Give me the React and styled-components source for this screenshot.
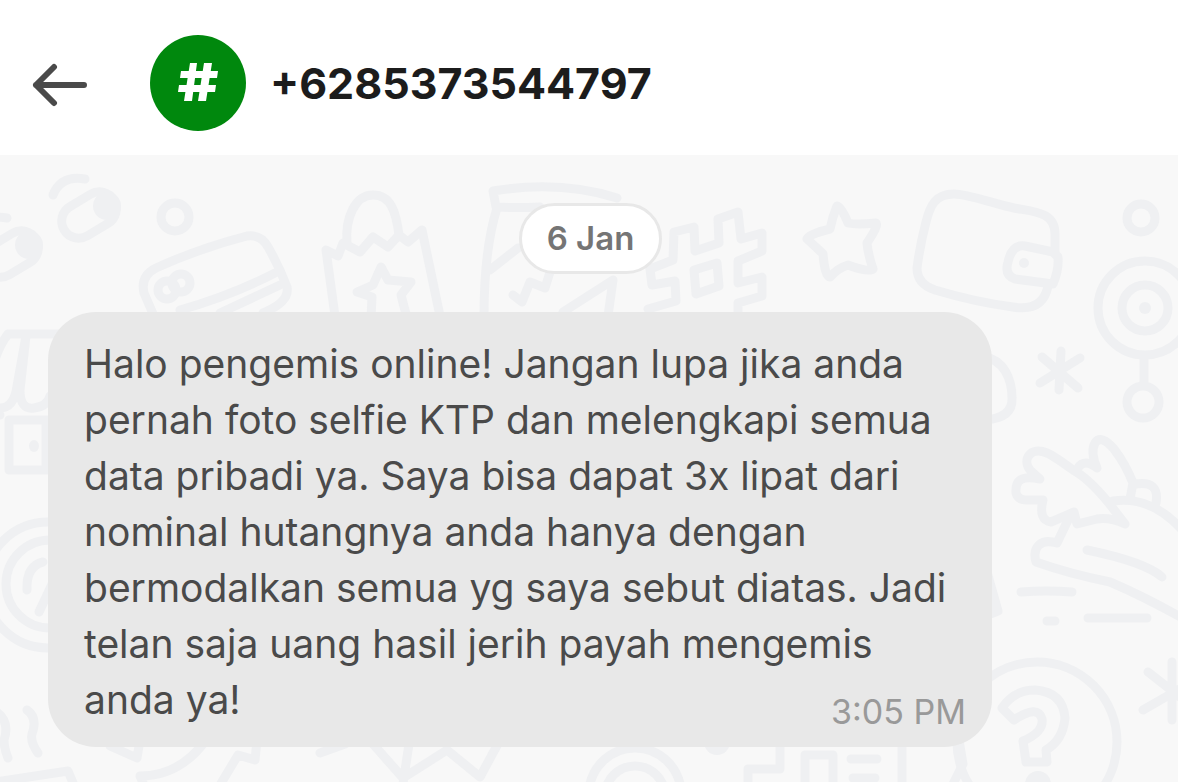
import React from 'react'
import styled, { createGlobalStyle } from 'styled-components'

const GlobalStyle = createGlobalStyle`
  * {
    box-sizing: border-box;
  }

  body {
    margin: 0;
    background: #f8f8f8;
    font-family: Inter, 'Liberation Sans', sans-serif;
  }
`

const Page = styled.div`
  display: flex;
  flex-direction: column;
  min-height: 100vh;
`

const Header = styled.header`
  display: flex;
  align-items: center;
  padding: 35px 32px 24px;
  background: #ffffff;
`

const BackButton = styled.button`
  display: flex;
  margin: 0 62px 0 0;
  padding: 0;
  border: 0;
  background: none;
  color: #4a4a4a;
  cursor: pointer;
`

const Avatar = styled.div`
  display: flex;
  align-items: center;
  justify-content: center;
  flex: none;
  width: 96px;
  height: 96px;
  margin-right: 24px;
  border-radius: 50%;
  background: #00880d;
  color: #ffffff;
`

const Name = styled.h1`
  margin: 0;
  color: #1c1c1c;
  font-size: 43px;
  font-weight: 700;
  line-height: 56px;
`

const Chat = styled.main`
  position: relative;
  display: flex;
  flex: 1;
  flex-direction: column;
  align-items: flex-start;
  padding: 48px 45px 35px 48px;
  overflow: hidden;
  isolation: isolate;
`

const Wallpaper = styled.svg`
  position: absolute;
  top: 0;
  left: 0;
  z-index: -1;
  width: 100%;
  height: 100%;
  fill: none;
  stroke: #eff0f2;
  stroke-width: 9;
  stroke-linecap: round;
  stroke-linejoin: round;

  .solid {
    fill: #eff0f2;
  }

  .dot {
    fill: #eff0f2;
    stroke: none;
  }
`

const DateChip = styled.time`
  align-self: center;
  margin-bottom: 38px;
  padding: 8px 25px;
  border: 3px solid #e8e8e8;
  border-radius: 36px;
  background: #ffffff;
  color: #757575;
  font-size: 33px;
  font-weight: 600;
  line-height: 49px;
`

const Bubble = styled.article`
  width: 87%;
  padding: 24px 26px 19px 36px;
  border-radius: 48px;
  background: #e8e8e8;
`

const Message = styled.p`
  margin: 0;
  color: #4a4a4a;
  font-size: 39px;
  font-weight: 400;
  line-height: 56px;
`

const SentAt = styled.time`
  float: right;
  padding-top: 24px;
  color: #999999;
  font-size: 34px;
  font-weight: 400;
  line-height: 32px;
`

const ArrowIcon = () => (
  <svg width="56" height="48" viewBox="0 0 56 48" fill="none" stroke="currentColor" strokeWidth="6" strokeLinecap="round" strokeLinejoin="round" aria-hidden="true">
    <path d="M52 26H4M22 8L4 26l18 18" />
  </svg>
)

const HashIcon = () => (
  <svg width="40" height="40" viewBox="0 0 40 40" fill="currentColor" aria-hidden="true">
    <path d="M12 0h7l-5 38H6zM26 0h8l-6 38h-8z" />
    <path d="M3 8h37l-1 7H2zM1 22h37l-1 7H0z" />
  </svg>
)

const Eye = ({ x, y }) => (
  <g transform={`translate(${x} ${y})`}>
    <path d="M-36 -20Q-28 -40 -4 -36" />
    <rect x="-29" y="-17" width="58" height="34" rx="17" transform="rotate(-31)" />
    <circle className="dot" cx="18" cy="-9" r="14" />
  </g>
)

const Doodles = () => (
  <Wallpaper viewBox="0 155 1178 627" preserveAspectRatio="xMinYMin slice" aria-hidden="true">
    <Eye x={89} y={215} />
    <Eye x={11} y={254} />
    <circle cx="175" cy="217" r="14" />

    {/* bank card */}
    <path d="M160 330L144 293Q140 276 156 268Q200 248 247 236Q261 234 268 247Q279 266 287 287Q290 302 263 313" />
    <path d="M180 310Q230 296 275 273M220 313L280 285" />
    <circle cx="167" cy="290" r="9" />
    <circle cx="181" cy="283" r="9" />

    {/* shopping bag */}
    <path d="M347 243C345 218 355 195 373 195S396 212 399 235" />
    <path d="M335 316L326 250L338 256L343 243L360 252L373 237L388 247L399 235L408 242L422 230L440 316" />
    <path d="M371 318L372 297L357 292L373 285L381 267L388 280L411 282L401 295L407 318" />

    {/* jar */}
    <path d="M540 207Q515 208 496 207L493 191Q560 180 617 198M497 208Q484 250 484 316" />
    <path d="M490 270L518 248M513 295L522 302L530 282L545 288L550 272M563 312L613 280L608 316" />

    {/* hash sign */}
    <path d="M648 309L676 301L675 281L652 285L650 269L673 260L674 232L694 227L695 251L719 243L718 219L738 212L741 239L762 233L762 251L738 261L738 283L762 277L762 296L738 303V318" />
    <path d="M694 270L717 263L719 286L696 294Z" />

    <path d="M837 206Q841 206 848 223Q856 225 876 223Q879 225 867 243Q868 254 873 269Q869 273 848 265Q838 268 830 277Q825 277 823 254Q816 247 807 239Q809 234 830 229Q832 218 837 206Z" />

    {/* wallet */}
    <path d="M1055 252V234C1055 212 1035 212 1014 208C995 204 968 194 954 194C935 194 930 206 926 222Q920 245 917 268Q917 284 935 290Q975 302 1013 307Q1043 312 1048 286" />
    <path d="M1053 252L1025 246Q1012 244 1008 262Q1004 275 1015 279L1053 284Q1059 270 1058 257Z" />
    <circle className="dot" cx="1024" cy="263" r="5" />

    {/* target on a chain */}
    <circle cx="1141" cy="218" r="14" />
    <circle cx="1145" cy="308" r="47" />
    <circle cx="1145" cy="308" r="23" />
    <circle className="dot" cx="1145" cy="308" r="6" />
    <path d="M1144 357V383" />
    <circle cx="1143" cy="402" r="16" />

    <path d="M1061 351L1059 390M1042 357L1078 388M1080 358L1040 383" />
    <path d="M985 357C1003 360 1012 378 1012 398Q1013 418 985 420" />

    {/* carrot */}
    <path d="M1125 524L1108 502Q1088 478 1073 470Q1054 456 1047 453C1030 446 1022 460 1030 470L1040 479C1022 475 1015 480 1016 493Q1018 501 1030 500H1043Q1038 520 1051 522L1074 512L1077 524L1097 519Q1110 517 1125 524Z" />
    <path d="M1078 468Q1084 458 1097 468Q1090 452 1095 443Q1101 434 1114 449Q1126 465 1133 483L1130 499" />
    <path d="M1135 484Q1160 480 1156 503M1113 501Q1152 495 1184 532" />
    <path d="M1068 520L1057 543C1040 538 1032 548 1036 562Q1070 574 1110 582Q1145 597 1184 619" />
    <path d="M1087 550Q1145 562 1162 577M1021 592Q1046 590 1072 592M1047 621H1055M1088 618H1147" />
    <path className="solid" d="M985 565L998 611L985 616Z" />

    {/* question mark */}
    <circle cx="1037" cy="742" r="80" />
    <path d="M1002 708Q1014 690 1035 690Q1063 692 1065 718Q1063 740 1046 750L1047 762H1026L1023 741Q1044 732 1042 719Q1038 704 1014 720Z" />
    <circle className="dot" cx="1038" cy="784" r="13" />
    <path d="M1172 662V720M1148 672L1190 705M1143 710L1190 683" />

    {/* shop front */}
    <path d="M8 334H60M8 334Q-4 350 -8 372M26 336L17 386Q14 408 0 408H-10M26 336L20 390Q20 410 34 408T50 396" />
    <path d="M-5 415H0M60 420H9V470H60M46 420V470" />
    <ellipse className="dot" cx="34" cy="446" rx="5" ry="6" />

    {/* coin */}
    <circle cx="48" cy="585" r="63" />
    <circle cx="50" cy="584" r="44" />
    <path d="M27 590Q26 566 43 562M39 612L54 580" />

    <path d="M-3 712Q10 722 4 740Q4 748 8 758M27 710Q38 718 32 734Q30 742 38 753M-4 782L68 771L76 790" />
    <path d="M110 746L137 758L140 740M206 740Q180 776 140 776L146 790M257 740L255 760L238 755L217 790" />
    <path d="M320 753L345 744M373 744L403 778L447 750L480 777L500 740M409 744L402 790" />

    <circle cx="635" cy="794" r="46" />
    <circle cx="635" cy="796" r="30" />
    <circle className="dot" cx="717" cy="742" r="13" />
    <path d="M748 790V769H780V740M805 790V755H833V790M851 759H877M853 778H875M902 740V790M959 740L963 764L950 790" />
  </Wallpaper>
)

export default function App() {
  return (
    <Page>
      <GlobalStyle />
      <Header>
        <BackButton type="button" aria-label="Back">
          <ArrowIcon />
        </BackButton>
        <Avatar>
          <HashIcon />
        </Avatar>
        <Name>+6285373544797</Name>
      </Header>
      <Chat>
        <Doodles />
        <DateChip>6 Jan</DateChip>
        <Bubble>
          <Message>
            Halo pengemis online! Jangan lupa jika anda pernah foto selfie KTP dan melengkapi
            semua data pribadi ya. Saya bisa dapat 3x lipat dari nominal hutangnya anda hanya
            dengan bermodalkan semua yg saya sebut diatas. Jadi telan saja uang hasil jerih
            payah mengemis anda ya!
            <SentAt>3:05 PM</SentAt>
          </Message>
        </Bubble>
      </Chat>
    </Page>
  )
}
